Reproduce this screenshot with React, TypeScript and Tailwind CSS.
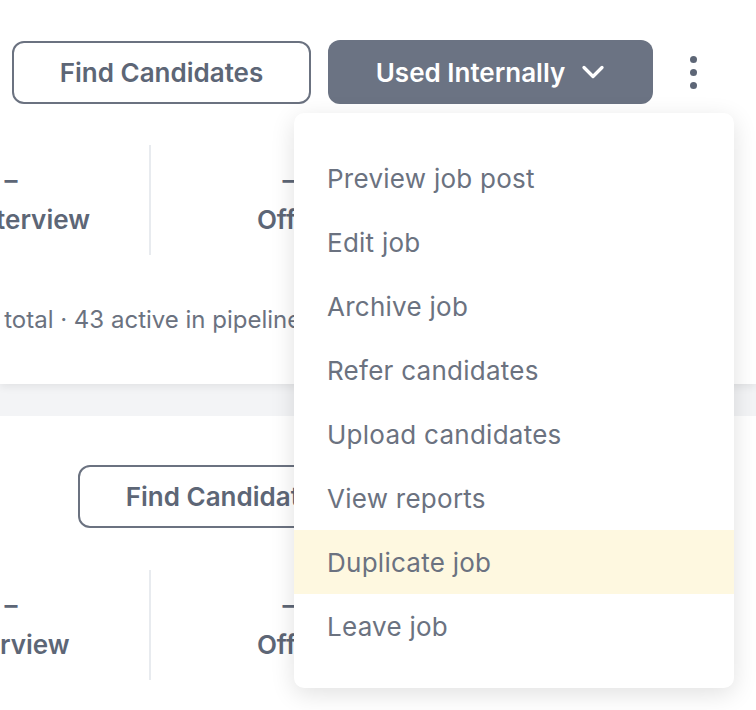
import { ChevronDown } from "lucide-react";

const menuItems = [
  "Preview job post",
  "Edit job",
  "Archive job",
  "Refer candidates",
  "Upload candidates",
  "View reports",
  "Duplicate job",
  "Leave job",
];

function StatsRow({ stages }: { stages: string[] }) {
  return (
    <div className="flex h-[110px] ml-[-127px]">
      {stages.map((s) => (
        <div
          key={s}
          className="w-[278px] shrink-0 flex flex-col items-center pt-[20px] gap-[10px] border-r-2 border-[#e8ebef]"
        >
          <div className="text-[26px] leading-[30px] font-semibold text-[#5d6676]">–</div>
          <div className="text-[26px] leading-[30px] font-semibold text-[#5d6676] whitespace-nowrap">{s}</div>
        </div>
      ))}
    </div>
  );
}

function OutlineButton() {
  return (
    <button className="w-[299px] h-[63px] shrink-0 rounded-[12px] border-2 border-[#6b7280] bg-white text-[26px] font-semibold text-[#5d6676]">
      Find Candidates
    </button>
  );
}

export default function App() {
  return (
    <div
      className="relative w-[756px] h-[710px] overflow-hidden bg-[#f3f4f6]"
      style={{ fontFamily: "Inter, 'Noto Sans', sans-serif" }}
    >
      {/* first job card */}
      <div className="h-[384px] bg-white shadow-[0_3px_8px_rgba(0,0,0,0.07)] pt-[40px] relative">
        <div className="flex items-center pl-[12px]">
          <OutlineButton />
          <button className="ml-[17px] w-[325px] h-[64px] shrink-0 rounded-[12px] bg-[#6b7383] text-white text-[26px] font-semibold flex items-center justify-center gap-[10px] pl-[6px]">
            Used Internally
            <ChevronDown size={36} strokeWidth={2.2} />
          </button>
          <button className="ml-[28px] w-[24px] h-[40px] flex flex-col items-center justify-center gap-[6px]">
            <span className="w-[7px] h-[7px] rounded-full bg-[#5d6676]" />
            <span className="w-[7px] h-[7px] rounded-full bg-[#5d6676]" />
            <span className="w-[7px] h-[7px] rounded-full bg-[#5d6676]" />
          </button>
        </div>
        <div className="mt-[41px]">
          <StatsRow stages={["1st Interview", "Offer", "Hired"]} />
        </div>
        <div className="mt-[50px] ml-[-32px] text-[24px] leading-[30px] text-[#6b7280] whitespace-nowrap">
          58 total · 43 active in pipeline
        </div>
      </div>

      {/* second job card */}
      <div className="mt-[32px] h-[400px] bg-white pt-[49px]">
        <div className="flex items-center pl-[78px]">
          <OutlineButton />
        </div>
        <div className="mt-[42px]">
          <StatsRow stages={["Interview", "Offer", "Hired"]} />
        </div>
      </div>

      {/* actions menu */}
      <div className="absolute left-[294px] top-[113px] w-[440px] rounded-[10px] bg-white shadow-[0_6px_24px_rgba(0,0,0,0.12)] pt-[33px] pb-[30px]">
        {menuItems.map((item) => (
          <div
            key={item}
            className={
              "h-[64px] flex items-center px-[33px] text-[26px] tracking-[0.01em] text-[#6b7280] " +
              (item === "Duplicate job" ? "bg-[#fef8e0]" : "")
            }
          >
            {item}
          </div>
        ))}
      </div>
    </div>
  );
}
